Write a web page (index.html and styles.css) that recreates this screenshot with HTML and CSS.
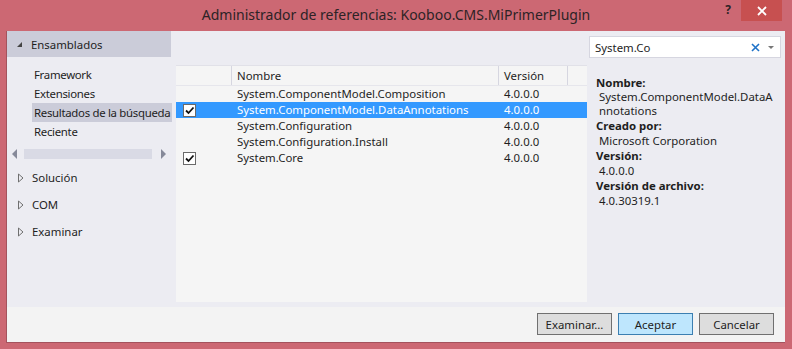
FILE: index.html
```html
<!DOCTYPE html>
<html lang="es">
<head>
<meta charset="utf-8">
<title>Administrador de referencias</title>
<link rel="stylesheet" href="styles.css">
</head>
<body>
<div class="window">
  <div class="titlebar">
    <div></div>
    <div class="title">Administrador de referencias: Kooboo.CMS.MiPrimerPlugin</div>
    <div class="controls">
      <span class="help">?</span>
      <span class="close"><svg width="10" height="10" viewBox="0 0 10 10"><path d="M1 1L9 9M9 1L1 9" stroke="#fff" stroke-width="1.8"/></svg></span>
    </div>
  </div>
  <div class="client">
    <div class="main">
      <div class="left">
        <div class="section-head"><span class="tri-down"></span>Ensamblados</div>
        <ul class="items">
          <li>Framework</li>
          <li>Extensiones</li>
          <li class="active">Resultados de la búsqueda</li>
          <li>Reciente</li>
        </ul>
        <div class="hscroll">
          <span class="arr arr-l"></span>
          <span class="track"></span>
          <span class="arr arr-r"></span>
        </div>
        <div class="sections">
          <div class="section"><svg class="tri-right" width="6" height="10" viewBox="0 0 6 10"><path d="M0.5 1L5 5L0.5 9Z" fill="none" stroke="#6f6f6f"/></svg>Solución</div>
          <div class="section"><svg class="tri-right" width="6" height="10" viewBox="0 0 6 10"><path d="M0.5 1L5 5L0.5 9Z" fill="none" stroke="#6f6f6f"/></svg>COM</div>
          <div class="section"><svg class="tri-right" width="6" height="10" viewBox="0 0 6 10"><path d="M0.5 1L5 5L0.5 9Z" fill="none" stroke="#6f6f6f"/></svg>Examinar</div>
        </div>
      </div>
      <div class="center">
        <div class="grid">
          <div class="row head">
            <div class="c-chk"></div>
            <div class="c-name">Nombre</div>
            <div class="c-ver">Versión</div>
          </div>
          <div class="row">
            <div class="c-chk"></div>
            <div class="c-name">System.ComponentModel.Composition</div>
            <div class="c-ver">4.0.0.0</div>
          </div>
          <div class="row sel">
            <div class="c-chk"><span class="box"><svg width="11" height="11" viewBox="0 0 11 11"><path d="M2 5.5L4.5 8L9.5 2.5" fill="none" stroke="#111" stroke-width="1.8"/></svg></span></div>
            <div class="c-name">System.ComponentModel.DataAnnotations</div>
            <div class="c-ver">4.0.0.0</div>
          </div>
          <div class="row">
            <div class="c-chk"></div>
            <div class="c-name">System.Configuration</div>
            <div class="c-ver">4.0.0.0</div>
          </div>
          <div class="row">
            <div class="c-chk"></div>
            <div class="c-name">System.Configuration.Install</div>
            <div class="c-ver">4.0.0.0</div>
          </div>
          <div class="row">
            <div class="c-chk"><span class="box"><svg width="11" height="11" viewBox="0 0 11 11"><path d="M2 5.5L4.5 8L9.5 2.5" fill="none" stroke="#111" stroke-width="1.8"/></svg></span></div>
            <div class="c-name">System.Core</div>
            <div class="c-ver">4.0.0.0</div>
          </div>
        </div>
      </div>
      <div class="right">
        <div class="search">
          <span class="query">System.Co</span>
          <svg class="clear" width="9" height="9" viewBox="0 0 9 9"><path d="M1 1L8 8M8 1L1 8" stroke="#1e72c8" stroke-width="1.6"/></svg>
          <span class="drop"></span>
        </div>
        <dl class="info">
          <dt>Nombre:</dt>
          <dd class="wrap">System.ComponentModel.DataAnnotations</dd>
          <dt>Creado por:</dt>
          <dd>Microsoft Corporation</dd>
          <dt>Versión:</dt>
          <dd>4.0.0.0</dd>
          <dt>Versión de archivo:</dt>
          <dd>4.0.30319.1</dd>
        </dl>
      </div>
    </div>
    <div class="footer">
      <button class="btn">Examinar...</button>
      <button class="btn primary">Aceptar</button>
      <button class="btn">Cancelar</button>
    </div>
  </div>
</div>
</body>
</html>
```

FILE: styles.css
```css
* { box-sizing: border-box; }
html, body { margin: 0; padding: 0; }
body {
  background: #cc6873;
  font-family: "Noto Sans", "Open Sans", sans-serif;
  font-size: 11.4px;
  color: #1e1e1e;
}
.window { width: 792px; height: 349px; display: flex; flex-direction: column; }
.titlebar {
  height: 31px;
  display: grid;
  grid-template-columns: 1fr auto 1fr;
  align-items: start;
}
.title {
  font-size: 14px;
  color: #2d2326;
  line-height: 30px;
}
.controls { display: flex; justify-content: flex-end; align-items: flex-start; padding-right: 10px; }
.help { font-weight: bold; font-size: 12px; color: #2d2326; width: 20px; text-align: center; line-height: 20px; margin-right: 3px; }
.close {
  width: 41px; height: 21px;
  background: #c75050;
  display: flex; align-items: center; justify-content: center;
}
.client {
  flex: 1;
  margin: 0 7px 6px 6px;
  border-left: 1px solid #a4535d;
  border-bottom: 1px solid #a4535d;
  background: #ececf2;
  display: flex; flex-direction: column;
}
.main {
  height: 276px;
  display: grid;
  grid-template-columns: 169px 411px 1fr;
}
.section-head {
  width: 164px; height: 26px;
  background: #cbccd9;
  display: flex; align-items: center;
  padding-left: 10px;
}
.tri-down {
  width: 0; height: 0;
  border-left: 5px solid transparent;
  border-bottom: 5px solid #444;
  margin-right: 9px;
  margin-top: 1px;
}
.items { list-style: none; margin: 8px 0 0 0; padding: 0 0 0 25px; }
.items li { height: 19px; line-height: 19px; padding-left: 2px; width: 140px; white-space: nowrap; overflow: hidden; letter-spacing: -0.3px; }
.items li.active { background: #cbccd9; }
.hscroll {
  display: flex; align-items: center;
  height: 12px; margin-top: 7px; padding-left: 5px;
  width: 164px;
}
.arr { width: 0; height: 0; border-top: 5px solid transparent; border-bottom: 5px solid transparent; }
.arr-l { border-right: 5px solid #868999; margin-right: 7px; }
.arr-r { border-left: 5px solid #868999; margin-left: 9px; }
.track { width: 128px; height: 10px; background: #d9dae5; }
.sections { margin-top: 4px; }
.section { height: 27px; display: flex; align-items: center; padding-left: 11px; }
.tri-right { margin-right: 8px; }
.center { padding-top: 34px; }
.grid {
  height: 237px;
  background: #f5f5f5;
  border-top: 1px solid #e1e1e8;
}
.row { display: flex; height: 16px; line-height: 16px; }
.row.head { height: 20px; line-height: 19px; border-bottom: 1px solid #e6e6ec; }
.row.head .c-chk, .row.head .c-name, .row.head .c-ver { border-right: 1px solid #d6d6e0; }
.c-chk { width: 56px; display: flex; align-items: center; padding-left: 7px; }
.c-name { width: 267px; padding-left: 5px; white-space: nowrap; overflow: hidden; }
.c-ver { width: 69px; padding-left: 5px; }
.row.sel { background: #3399ff; color: #fff; }
.box {
  width: 13px; height: 13px; background: #fff; border: 1px solid #6a6a6a;
  display: flex; align-items: center; justify-content: center;
}
.right { padding: 5px 4px 0 2px; }
.search {
  height: 22px; background: #fff; border: 1px solid #d6d6e0;
  display: flex; align-items: center; padding: 0 6px 0 5px;
}
.query { flex: 1; }
.clear { margin-right: 8px; }
.drop { width: 0; height: 0; border-left: 3px solid transparent; border-right: 3px solid transparent; border-top: 3px solid #777; }
.info { margin: 17px 0 0 7px; width: 180px; line-height: 15px; }
.info dt { font-weight: bold; }
.info dd { margin: 0 0 0 3px; }
.info dd.wrap { word-break: break-all; line-height: 14px; }
.footer {
  flex: 1;
  background: #f3f3f3;
  display: flex; justify-content: flex-end; align-items: flex-start;
  gap: 6px;
  padding: 6px 11px 0 0;
}
.btn {
  width: 75px; height: 22px;
  font-family: inherit; font-size: 11.4px; color: #1e1e1e;
  background: #dddddd; border: 1px solid #707070;
  padding: 0;
}
.btn.primary { background: #bee6fd; border-color: #3c7fb1; }
```
